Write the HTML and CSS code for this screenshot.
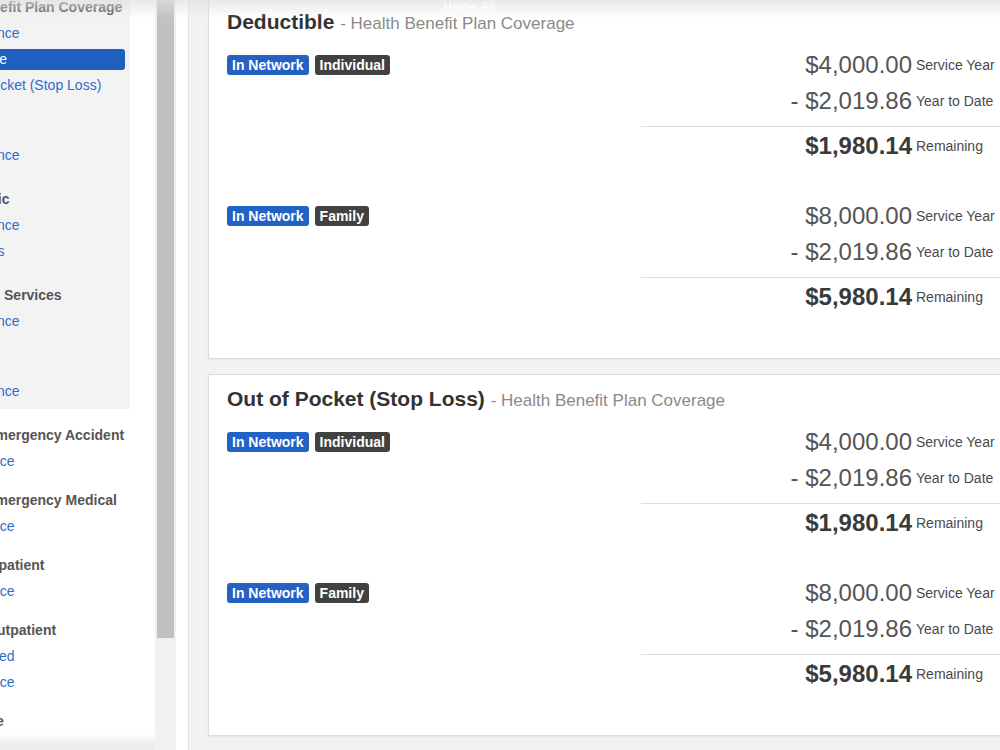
FILE: index.html
```html
<!DOCTYPE html>
<html lang="en">
<head>
<meta charset="utf-8">
<title>Benefits</title>
<link rel="stylesheet" href="styles.css">
</head>
<body>
<div class="topbar"><span class="user">Haider Ali</span></div>
<div class="bottomfade"></div>
<div class="page">
  <aside class="sidebar">
    <div class="panel">
      <div class="group">
        <div class="group-title">Health Benefit Plan Coverage</div>
        <a class="nav-link">Coinsurance</a>
        <a class="nav-link active">Deductible</a>
        <a class="nav-link">Out of Pocket (Stop Loss)</a>
      </div>
      <div class="group">
        <div class="group-title">Podiatry</div>
        <a class="nav-link">Coinsurance</a>
      </div>
      <div class="group">
        <div class="group-title">Chiropractic</div>
        <a class="nav-link">Coinsurance</a>
        <a class="nav-link">Max Visits</a>
      </div>
      <div class="group">
        <div class="group-title">Laboratory Services</div>
        <a class="nav-link">Coinsurance</a>
      </div>
      <div class="group">
        <div class="group-title">Dental</div>
        <a class="nav-link">Coinsurance</a>
      </div>
    </div>
    <div class="plain">
      <div class="group">
        <div class="group-title">Hospital Emergency Accident</div>
        <a class="plain-link">Coinsurance</a>
      </div>
      <div class="group">
        <div class="group-title">Hospital Emergency Medical</div>
        <a class="plain-link">Coinsurance</a>
      </div>
      <div class="group">
        <div class="group-title">Hospital Inpatient</div>
        <a class="plain-link">Coinsurance</a>
      </div>
      <div class="group">
        <div class="group-title">Hospital Outpatient</div>
        <a class="plain-link">Not Covered</a>
        <a class="plain-link">Coinsurance</a>
      </div>
      <div class="group">
        <div class="group-title">Vision Care</div>
        <a class="plain-link">Coinsurance</a>
      </div>
    </div>
  </aside>
  <div class="scrolltrack"><div class="thumb"></div></div>
  <div class="spacer"></div>
  <main class="main">
    <section class="card first">
      <h3 class="card-title">Deductible <small>- Health Benefit Plan Coverage</small></h3>
      <div class="block">
        <div class="tags"><span class="badge blue">In Network</span><span class="badge dark">Individual</span></div>
        <div class="amounts">
          <div class="amt-row"><span class="amt">$4,000.00</span><span class="lbl">Service Year</span></div>
          <div class="amt-row"><span class="amt">- $2,019.86</span><span class="lbl">Year to Date</span></div>
          <div class="sep"></div>
          <div class="amt-row"><span class="amt total">$1,980.14</span><span class="lbl">Remaining</span></div>
        </div>
      </div>
      <div class="block">
        <div class="tags"><span class="badge blue">In Network</span><span class="badge dark">Family</span></div>
        <div class="amounts">
          <div class="amt-row"><span class="amt">$8,000.00</span><span class="lbl">Service Year</span></div>
          <div class="amt-row"><span class="amt">- $2,019.86</span><span class="lbl">Year to Date</span></div>
          <div class="sep"></div>
          <div class="amt-row"><span class="amt total">$5,980.14</span><span class="lbl">Remaining</span></div>
        </div>
      </div>
    </section>
    <section class="card">
      <h3 class="card-title">Out of Pocket (Stop Loss) <small>- Health Benefit Plan Coverage</small></h3>
      <div class="block">
        <div class="tags"><span class="badge blue">In Network</span><span class="badge dark">Individual</span></div>
        <div class="amounts">
          <div class="amt-row"><span class="amt">$4,000.00</span><span class="lbl">Service Year</span></div>
          <div class="amt-row"><span class="amt">- $2,019.86</span><span class="lbl">Year to Date</span></div>
          <div class="sep"></div>
          <div class="amt-row"><span class="amt total">$1,980.14</span><span class="lbl">Remaining</span></div>
        </div>
      </div>
      <div class="block">
        <div class="tags"><span class="badge blue">In Network</span><span class="badge dark">Family</span></div>
        <div class="amounts">
          <div class="amt-row"><span class="amt">$8,000.00</span><span class="lbl">Service Year</span></div>
          <div class="amt-row"><span class="amt">- $2,019.86</span><span class="lbl">Year to Date</span></div>
          <div class="sep"></div>
          <div class="amt-row"><span class="amt total">$5,980.14</span><span class="lbl">Remaining</span></div>
        </div>
      </div>
    </section>
  </main>
</div>
</body>
</html>
```

FILE: styles.css
```css
html, body {
  margin: 0;
  padding: 0;
  width: 1000px;
  height: 750px;
  overflow: hidden;
  background: #ffffff;
  font-family: "Liberation Sans", Arial, sans-serif;
}

.topbar {
  position: absolute;
  top: 0;
  left: 0;
  width: 1000px;
  height: 18px;
  z-index: 5;
  background: linear-gradient(to bottom, rgba(225, 225, 225, 0.75), rgba(255, 255, 255, 0));
}

.topbar .user {
  position: absolute;
  left: 443px;
  top: 0;
  font-size: 12px;
  line-height: 14px;
  color: #ffffff;
}

.bottomfade {
  position: absolute;
  left: 0;
  bottom: 0;
  width: 155px;
  height: 16px;
  z-index: 5;
  background: linear-gradient(to bottom, rgba(240, 240, 240, 0), rgba(236, 236, 236, 1) 60%);
}

.page {
  display: flex;
  margin-left: -100px;
  width: 1200px;
  height: 750px;
}

/* ---------- Sidebar ---------- */
.sidebar {
  flex: none;
  width: 230px;
  padding-right: 25px;
  height: 750px;
  overflow: hidden;
  background: #ffffff;
}

.group {
  display: flex;
  flex-direction: column;
  align-items: stretch;
}

.panel {
  background: #f3f3f3;
  margin-top: -12px;
  padding: 7px 5px 5px 27px;
}

.group-title {
  font-size: 14px;
  font-weight: bold;
  line-height: 25px;
  color: #555555;
  white-space: nowrap;
}

.panel .group + .group {
  margin-top: 19px;
}

.nav-link {
  display: block;
  margin: 3px 0 2px 8px;
  padding: 0 6px;
  line-height: 21px;
  font-size: 14px;
  color: #2f6dc9;
  white-space: nowrap;
  border-radius: 3px;
}

.nav-link.active {
  background: #1f5fbf;
  color: #ffffff;
}

.plain {
  padding: 14px 5px 0 27px;
}

.plain .group + .group {
  margin-top: 14px;
}

.plain-link {
  display: block;
  margin-left: 9px;
  line-height: 26px;
  font-size: 14px;
  color: #2f6dc9;
  white-space: nowrap;
}

/* ---------- Scrollbar ---------- */
.scrolltrack {
  flex: none;
  width: 21px;
  height: 750px;
  background: #f1f1f1;
}

.thumb {
  margin-left: 2px;
  width: 17px;
  height: 638px;
  background: #c1c1c1;
}

.spacer {
  flex: none;
  width: 12px;
  background: #ffffff;
}

/* ---------- Main ---------- */
.main {
  flex: none;
  width: 900px;
  height: 750px;
  background: #f2f2f2;
  border-left: 1px solid #e3e3e3;
  padding-left: 19px;
}

.card {
  width: 828px;
  background: #ffffff;
  border: 1px solid #dddddd;
  box-shadow: 0 1px 2px rgba(0, 0, 0, 0.06);
  padding: 12px 18px 9px 18px;
  margin-bottom: 15px;
}

.card.first {
  margin-top: -3px;
}

.card-title {
  margin: 0 0 13px 0;
  font-size: 21px;
  line-height: 24px;
  font-weight: bold;
  color: #333333;
  white-space: nowrap;
}

.card-title small {
  font-size: 17px;
  line-height: 1;
  font-weight: normal;
  color: #8a8a8a;
}

.block {
  display: grid;
  grid-template-columns: 414px 414px;
  margin-bottom: 34px;
}

.tags {
  display: flex;
  align-items: center;
  gap: 6px;
  height: 36px;
}

.badge {
  font-size: 14px;
  font-weight: bold;
  line-height: 20px;
  padding: 0 5px;
  border-radius: 3px;
  color: #ffffff;
}

.badge.blue {
  background: #2262c4;
}

.badge.dark {
  background: #414141;
}

.amt-row {
  display: flex;
  align-items: center;
  height: 36px;
}

.amt {
  width: 271px;
  text-align: right;
  font-size: 24px;
  color: #555555;
  white-space: nowrap;
}

.amt.total {
  font-weight: bold;
  color: #3a3a3a;
}

.lbl {
  margin-left: 4px;
  font-size: 14px;
  color: #4a4a4a;
  white-space: nowrap;
}

.sep {
  height: 1px;
  background: #dddddd;
  margin: 7px 0 1px 0;
}
```
